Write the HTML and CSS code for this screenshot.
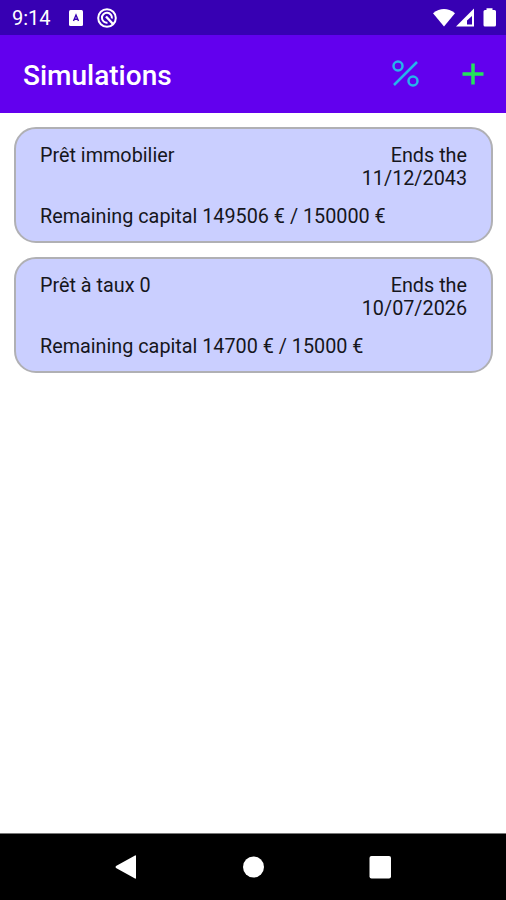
FILE: index.html
```
<!DOCTYPE html>
<html lang="en">
<head>
  <meta charset="utf-8">
  <meta name="viewport" content="width=device-width, initial-scale=1.0">
  <title>Simulations</title>
  <link rel="stylesheet" href="styles.css">
</head>
<body>

  <div class="status-bar">
    <span class="clock">9:14</span>
    <svg class="status-app" width="14" height="16" viewBox="0 0 14 16">
      <rect width="14" height="16" rx="1.5" fill="#fff"/>
      <path d="M4.500 11L7 5L9.500 11M5.500 9.200H8.500" fill="none" stroke="#3700b3" stroke-width="1.4"/>
    </svg>
    <svg class="status-sync" width="20" height="20" viewBox="0 0 20 20" fill="none" stroke="#fff" stroke-width="2">
      <circle cx="10" cy="10" r="8.8"/>
      <path d="M10.500 14.800A5 5 0 1 1 14.900 10.500"/>
      <path d="M9 8.500L16 16" stroke-width="2.4"/>
    </svg>
    <svg class="status-right" width="63" height="20" viewBox="0 0 63 20" fill="#fff">
      <path d="M0 5.2Q11 -3 22 5.2L11 18.500Z"/>
      <path d="M41 0.500V18.500H23Z"/>
      <path d="M39 8V16.500H34V12.500Z" fill="#3700b3"/>
      <path d="M53.500 0.200H59.500V2H61.500Q63 2 63 3.500V17Q63 18.500 61.500 18.500H52Q50.500 18.500 50.500 17V3.500Q50.500 2 52 2H53.500Z"/>
    </svg>
  </div>

  <div class="app-bar">
    <h1>Simulations</h1>
    <svg class="percent" width="28" height="28" viewBox="0 0 28 28" fill="none" stroke="#27b4ea" stroke-width="2.5">
      <circle cx="6" cy="6" r="4.500"/>
      <circle cx="21" cy="21" r="4.500"/>
      <path d="M2 25L25 2"/>
    </svg>
    <svg class="plus" width="22" height="22" viewBox="0 0 22 22" stroke="#24e35c" stroke-width="3.500">
      <path d="M11 0.500V21.500M0.500 11H21.500"/>
    </svg>
  </div>

  <div class="list">
    <div class="card">
      <div class="card-top">
        <span>Prêt immobilier</span>
        <span class="ends">Ends the<br>11/12/2043</span>
      </div>
      <div class="capital">Remaining capital 149506 € / 150000 €</div>
    </div>
    <div class="card">
      <div class="card-top">
        <span>Prêt à taux 0</span>
        <span class="ends">Ends the<br>10/07/2026</span>
      </div>
      <div class="capital">Remaining capital 14700 € / 15000 €</div>
    </div>
  </div>

  <div class="nav-bar">
    <svg width="22" height="26" viewBox="0 0 22 26" fill="#fff"><path d="M20 1.500Q21 1 21 2V24Q21 25 20 24.500L1 14Q0 13 1 12Z"/></svg>
    <svg width="22" height="22" viewBox="0 0 22 22" fill="#fff"><circle cx="11.500" cy="11" r="10.500"/></svg>
    <svg width="22" height="23" viewBox="0 0 22 23" fill="#fff"><rect x="0.500" width="21.500" height="22.500" rx="2"/></svg>
  </div>

</body>
</html>
```
FILE: styles.css
```
* {
  box-sizing: border-box;
}

body {
  display: flex;
  flex-direction: column;
  height: 100vh;
  margin: 0;
  background: #fff;
  color: #16161c;
  font-family: Roboto, sans-serif;
  font-size: 20px;
  overflow: hidden;
}

svg {
  display: block;
  flex: none;
}

.status-bar {
  display: flex;
  align-items: center;
  height: 35px;
  padding: 0 10px 0 12px;
  background: #3700b3;
  color: #fff;
}

.clock {
  width: 57px;
  line-height: 23px;
  padding-top: 1px;
}

.status-sync {
  margin-left: 14px;
}

.status-right {
  margin-left: auto;
}

.app-bar {
  display: flex;
  align-items: center;
  height: 78px;
  padding: 0 22px 0 23px;
  background: #6200ee;
}

.app-bar h1 {
  margin: 0;
  padding-top: 2px;
  color: #fff;
  font-size: 28px;
  font-weight: 500;
}

.percent {
  margin-left: auto;
}

.plus {
  margin-left: 42px;
}

.list {
  flex: 1;
  display: flex;
  flex-direction: column;
  gap: 14px;
  padding: 14px 13px 0 14px;
}

.card {
  height: 116px;
  padding: 15px 24px 0;
  border: 2px solid #b0b0b4;
  border-radius: 22px;
  background: #cacfff;
  font-size: 19.8px;
  line-height: 23px;
}

.card-top {
  display: flex;
  justify-content: space-between;
}

.ends {
  text-align: right;
}

.capital {
  margin-top: 15px;
}

.nav-bar {
  display: flex;
  align-items: center;
  justify-content: space-between;
  height: 67px;
  padding: 0 115px;
  border-top: 1px solid #777;
  background: #000;
}
```
